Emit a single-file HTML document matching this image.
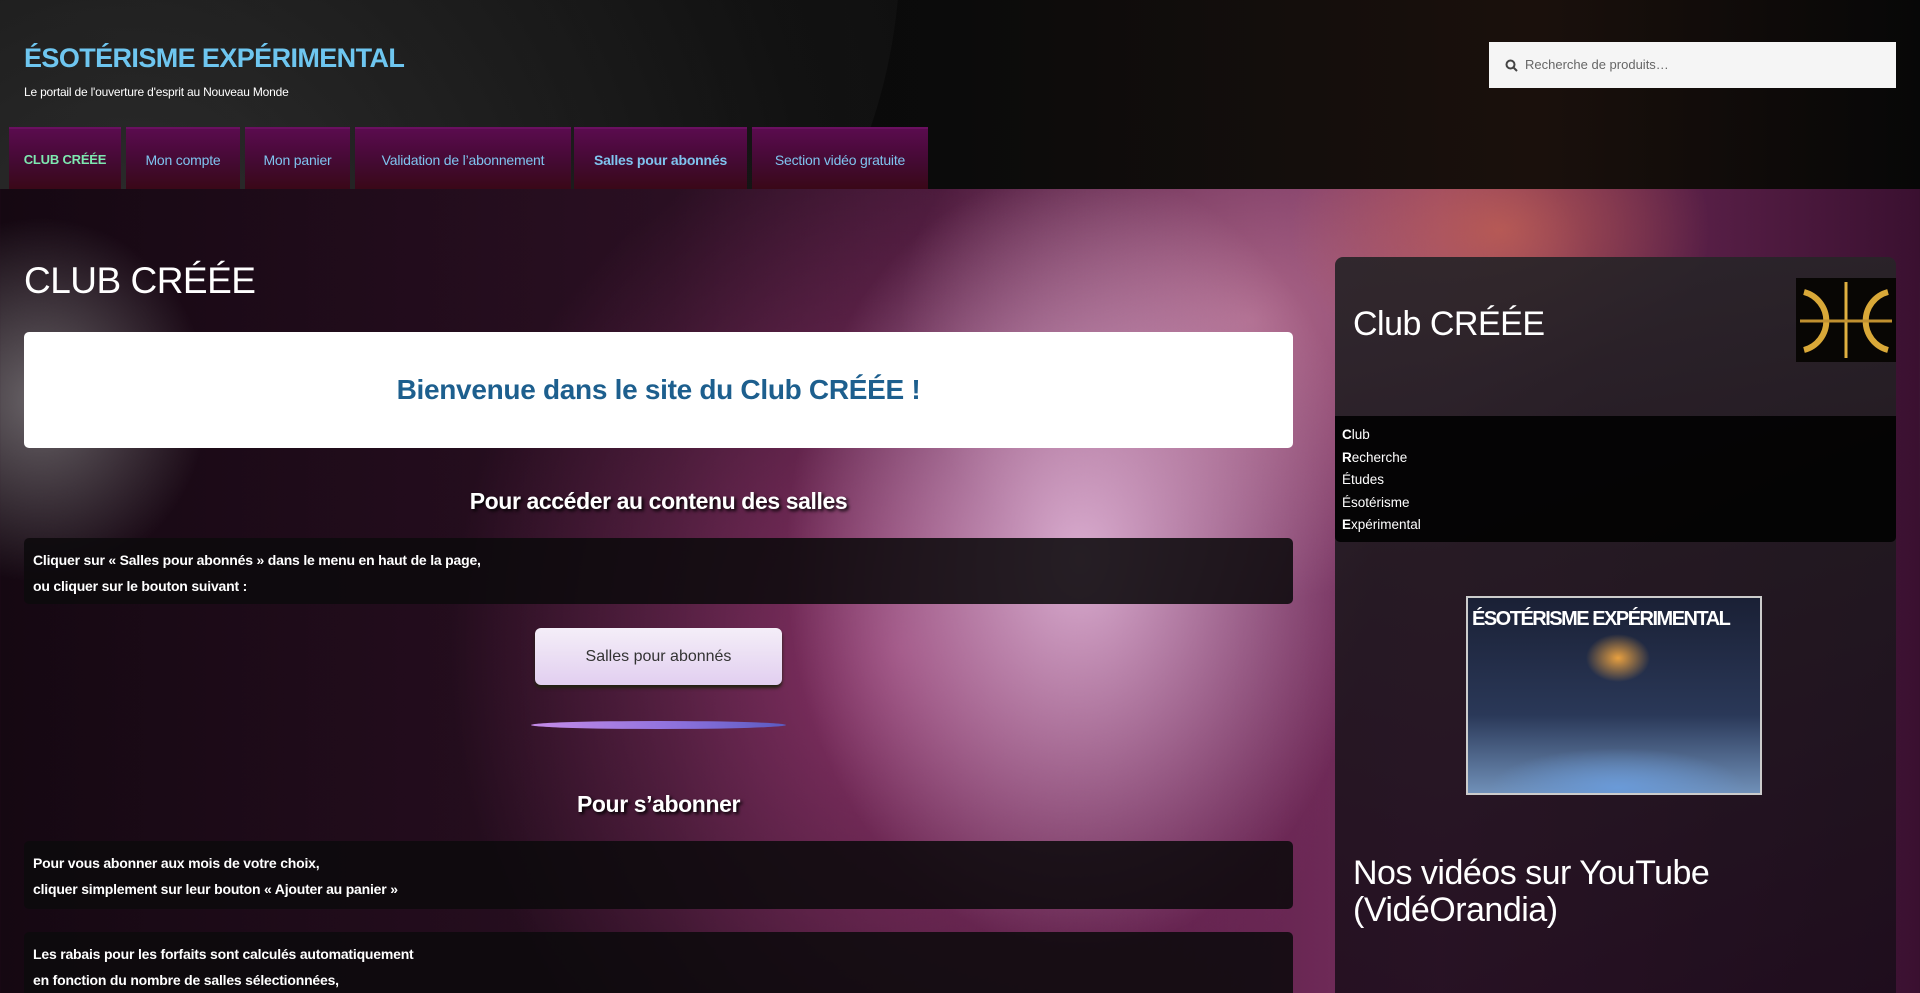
<!DOCTYPE html>
<html><head><meta charset="utf-8">
<style>
*{margin:0;padding:0;box-sizing:border-box}
html,body{width:1920px;height:993px;overflow:hidden}
body{position:relative;font-family:"Liberation Sans",sans-serif;color:#fff;
background:
radial-gradient(ellipse 300px 220px at 1500px 230px, rgba(200,100,80,.75), transparent 70%),
radial-gradient(ellipse 420px 560px at 1080px 560px, rgba(235,195,228,.85), transparent 70%),
radial-gradient(ellipse 500px 400px at 1250px 320px, rgba(200,130,160,.7), transparent 70%),
radial-gradient(ellipse 240px 260px at 40px 400px, rgba(160,160,160,.6), transparent 70%),
radial-gradient(ellipse 600px 700px at 900px 650px, rgba(160,60,120,.75), transparent 75%),
linear-gradient(90deg,#150812 0%,#2a0f22 35%,#5a1f48 60%,#7a3060 75%,#3a1030 100%);}
.hdr{position:absolute;left:0;top:0;width:1920px;height:189px;background:linear-gradient(90deg,#050505,#0b0b0b 50%,#1a100c 80%,#070707);overflow:hidden}
.hdr:after{content:"";position:absolute;left:-200px;top:-600px;width:1100px;height:1100px;border-radius:50%;background:radial-gradient(circle at 30% 80%,rgba(120,120,120,.35),rgba(40,40,40,.25) 60%,rgba(20,20,20,.2))}
.title{position:absolute;left:24px;top:43px;font-size:27px;font-weight:bold;color:#6ec6f0;letter-spacing:-.6px;z-index:2}
.tag{position:absolute;left:24px;top:85px;font-size:12px;color:#fff;z-index:2;letter-spacing:-.2px}
.search{position:absolute;left:1489px;top:42px;width:407px;height:46px;background:#f5f5f5;color:#666;font-size:13px;padding:15px 0 0 36px;z-index:2}
.search svg{position:absolute;left:16px;top:17px}
.nav{position:absolute;top:127px;height:62px;background:linear-gradient(#5a0b4e,#420a30 60%,#3a0818);color:#7fc4ef;font-size:14px;text-align:center;line-height:62px;z-index:2;border-top:2px solid #6a1060;letter-spacing:-.2px}
.h1{position:absolute;left:24px;top:260px;font-size:37px;color:#fff;letter-spacing:-.5px}
.white{position:absolute;left:24px;top:332px;width:1269px;height:116px;background:#fff;border-radius:5px;color:#1d5f8e;font-size:28px;font-weight:bold;text-align:center;line-height:116px;letter-spacing:-.3px}
.h2{position:absolute;left:24px;width:1269px;text-align:center;font-size:23px;font-weight:bold;text-shadow:2px 2px 3px #000;letter-spacing:-.4px}
.box{position:absolute;left:24px;width:1269px;background:rgba(12,10,12,.88);border-radius:5px;font-size:14px;font-weight:bold;padding:9px 9px;line-height:26px;letter-spacing:-.2px}
.btn{position:absolute;left:535px;top:628px;width:247px;height:57px;border-radius:6px;background:linear-gradient(#f4eef8,#e2cff0);color:#333;font-size:16px;text-align:center;line-height:57px;box-shadow:0 3px 3px #221}
.line{position:absolute;left:531px;top:721px;width:255px;height:8px;border-radius:50%;background:linear-gradient(90deg,#c58ce8,#8a70dc 60%,#5a5ac0)}
.side{position:absolute;left:1335px;top:257px;width:561px;height:740px;border-radius:8px 8px 0 0;background:linear-gradient(rgba(40,36,40,.93),rgba(30,24,30,.9) 40%,rgba(25,12,25,.85))}
.stitle{position:absolute;left:1353px;top:305px;font-size:34px;color:#fff;letter-spacing:-.5px}
.logo{position:absolute;left:1796px;top:278px;width:100px;height:84px;background:#080604}
.list{position:absolute;left:1335px;top:416px;width:561px;height:126px;background:rgba(3,3,3,.95);border-radius:0 0 5px 5px;font-size:13.5px;padding:8px 7px;line-height:22.5px}
.img{position:absolute;left:1466px;top:596px;width:296px;height:199px;border:2px solid #ccc;background:
radial-gradient(ellipse 40px 30px at 150px 60px,#e8a040,transparent 80%),
radial-gradient(ellipse 160px 50px at 150px 190px,#6a9ad8,transparent 80%),
linear-gradient(#1a2035,#2a3858 60%,#7090b8);}
.img b{position:absolute;left:4px;top:10px;font-size:20px;color:#fff;letter-spacing:-1.5px;white-space:nowrap}
.yt{position:absolute;left:1353px;top:855px;font-size:34px;line-height:37px;color:#fff;letter-spacing:-.5px}
</style></head><body>
<div class="hdr"></div>
<div class="title">ÉSOTÉRISME EXPÉRIMENTAL</div>
<div class="tag">Le portail de l'ouverture d'esprit au Nouveau Monde</div>
<div class="search"><svg width="13" height="13" viewBox="0 0 13 13"><circle cx="5.5" cy="5.5" r="4" stroke="#444" stroke-width="2" fill="none"/><path d="M8.5 8.5l3.5 3.5" stroke="#444" stroke-width="2"/></svg>Recherche de produits…</div>
<div class="nav" style="left:9px;width:112px;color:#7ee8b0;font-weight:bold;font-size:13px">CLUB CRÉÉE</div>
<div class="nav" style="left:126px;width:114px">Mon compte</div>
<div class="nav" style="left:245px;width:105px">Mon panier</div>
<div class="nav" style="left:355px;width:216px">Validation de l’abonnement</div>
<div class="nav" style="left:574px;width:173px;font-weight:bold">Salles pour abonnés</div>
<div class="nav" style="left:752px;width:176px">Section vidéo gratuite</div>

<div class="h1">CLUB CRÉÉE</div>
<div class="white">Bienvenue dans le site du Club CRÉÉE !</div>
<div class="h2" style="top:488px">Pour accéder au contenu des salles</div>
<div class="box" style="top:538px;height:66px">Cliquer sur « Salles pour abonnés » dans le menu en haut de la page,<br>ou cliquer sur le bouton suivant :</div>
<div class="btn">Salles pour abonnés</div>
<div class="line"></div>
<div class="h2" style="top:791px">Pour s’abonner</div>
<div class="box" style="top:841px;height:68px">Pour vous abonner aux mois de votre choix,<br>cliquer simplement sur leur bouton « Ajouter au panier »</div>
<div class="box" style="top:932px;height:80px">Les rabais pour les forfaits sont calculés automatiquement<br>en fonction du nombre de salles sélectionnées,</div>

<div class="side"></div>
<div class="stitle">Club CRÉÉE</div>
<div class="logo"><svg width="100" height="84" viewBox="0 0 100 84"><g stroke="#d9a838" stroke-width="6" fill="none"><path d="M8 14 A30 30 0 0 1 8 72"/><path d="M92 14 A30 30 0 0 0 92 72"/></g><path d="M50 4V80" stroke="#e0b040" stroke-width="3"/><path d="M4 43H96" stroke="#c09030" stroke-width="3"/></svg></div>
<div class="list"><b>C</b>lub<br><b>R</b>echerche<br>Études<br>Ésotérisme<br><b>E</b>xpérimental</div>
<div class="img"><b>ÉSOTÉRISME EXPÉRIMENTAL</b></div>
<div class="yt">Nos vidéos sur YouTube<br>(VidéOrandia)</div>
</body></html>
